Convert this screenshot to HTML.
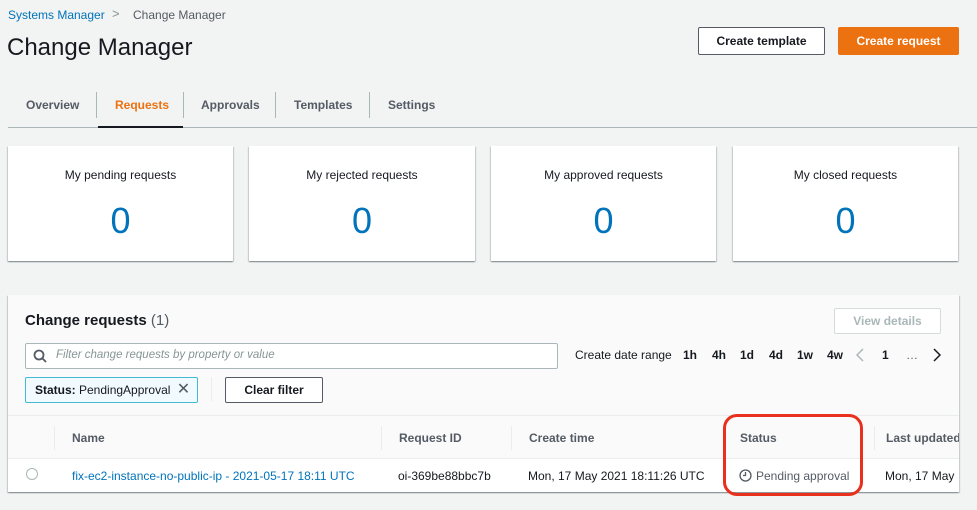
<!DOCTYPE html>
<html><head><style>
body{margin:0;width:977px;height:510px;background:#f2f3f3;font-family:"Liberation Sans",sans-serif;position:relative;overflow:hidden;color:#16191f}
.a{position:absolute;white-space:nowrap}
.card{position:absolute;top:146px;height:115px;background:#fff;box-shadow:0 1px 1px rgba(0,28,36,.3),1px 1px 1px rgba(0,28,36,.15),-1px 1px 1px rgba(0,28,36,.15)}
.card .t{position:absolute;top:22px;width:100%;text-align:center;font-size:12px;color:#16191f}
.card .n{position:absolute;top:54px;width:100%;text-align:center;font-size:36px;color:#0073bb}
.tab{position:absolute;top:98px;font-size:12px;font-weight:bold;color:#545b64}
.sep{position:absolute;top:92px;width:1px;height:26px;background:#aab7b8}
.b{font-weight:bold}
.d{position:absolute;top:53px;font-size:12px;font-weight:bold}
</style></head><body>
<div class="a" style="left:8px;top:8px;font-size:12px;color:#0073bb">Systems Manager</div>
<div class="a" style="left:112px;top:6px;font-size:13px;color:#879596">&gt;</div>
<div class="a" style="left:133px;top:8px;font-size:12px;color:#545b64">Change Manager</div>
<div class="a" style="left:7px;top:34px;font-size:24px;color:#16191f">Change Manager</div>
<div class="a b" style="left:698px;top:27px;width:125px;height:26px;border:1px solid #545b64;background:#fff;border-radius:2px;font-size:12px;text-align:center;line-height:26px;color:#16191f">Create template</div>
<div class="a b" style="left:838px;top:27px;width:121px;height:28px;background:#ec7211;border-radius:2px;font-size:12px;text-align:center;line-height:28px;color:#fff">Create request</div>
<div class="tab" style="left:26px">Overview</div>
<div class="sep" style="left:96px"></div>
<div class="tab" style="left:115px;color:#ec7211">Requests</div>
<div class="sep" style="left:183px"></div>
<div class="tab" style="left:201px">Approvals</div>
<div class="sep" style="left:275px"></div>
<div class="tab" style="left:294px">Templates</div>
<div class="sep" style="left:369px"></div>
<div class="tab" style="left:388px">Settings</div>
<div class="a" style="left:8px;top:127px;width:969px;height:1px;background:#aab7b8"></div>
<div class="a" style="left:98px;top:126px;width:85px;height:2px;background:#16191f"></div>
<div class="card" style="left:8px;width:225px"><div class="t">My pending requests</div><div class="n">0</div></div>
<div class="card" style="left:249px;width:226px"><div class="t">My rejected requests</div><div class="n">0</div></div>
<div class="card" style="left:491px;width:225px"><div class="t">My approved requests</div><div class="n">0</div></div>
<div class="card" style="left:733px;width:225px"><div class="t">My closed requests</div><div class="n">0</div></div>
<div class="a" style="left:8px;top:295px;width:951px;height:197px;background:#fafafa;overflow:hidden;box-shadow:0 1px 1px rgba(0,28,36,.3),1px 1px 1px rgba(0,28,36,.15),-1px 1px 1px rgba(0,28,36,.15)">
 <div class="a b" style="left:17px;top:17px;font-size:15px">Change requests <span style="font-weight:normal;color:#545b64">(1)</span></div>
 <div class="a b" style="left:826px;top:13px;width:105px;height:24px;border:1px solid #d5dbdb;background:#fff;border-radius:2px;font-size:12px;color:#aab7b8;text-align:center;line-height:24px">View details</div>
 <div class="a" style="left:17px;top:48px;width:531px;height:24px;border:1px solid #aab7b8;background:#fff;border-radius:2px">
  <svg class="a" style="left:7px;top:5px" width="14" height="14" viewBox="0 0 14 14"><circle cx="6" cy="6" r="4.5" fill="none" stroke="#545b64" stroke-width="1.8"/><path d="M9.3 9.3L13 13" stroke="#545b64" stroke-width="1.8"/></svg>
  <div class="a" style="left:30px;top:5px;font-size:11.5px;font-style:italic;color:#879596">Filter change requests by property or value</div>
 </div>
 <div class="a" style="left:567px;top:53px;font-size:12px">Create date range</div>
 <div class="d" style="left:675px">1h</div>
 <div class="d" style="left:704px">4h</div>
 <div class="d" style="left:732px">1d</div>
 <div class="d" style="left:761px">4d</div>
 <div class="d" style="left:789px">1w</div>
 <div class="d" style="left:819px">4w</div>
 <svg class="a" style="left:848px;top:53px" width="8" height="14" viewBox="0 0 8 14"><path d="M7 1L1 7l6 6" fill="none" stroke="#aab7b8" stroke-width="1.5"/></svg>
 <div class="d" style="left:874px">1</div>
 <div class="a" style="left:898px;top:53px;font-size:12px;color:#545b64">…</div>
 <svg class="a" style="left:925px;top:53px" width="8" height="14" viewBox="0 0 8 14"><path d="M1 1l6 6-6 6" fill="none" stroke="#16191f" stroke-width="1.5"/></svg>
 <div class="a" style="left:17px;top:82px;width:171px;height:24px;border:1px solid #44b9d6;background:#f1faff;border-radius:2px;font-size:12px;line-height:24px">
  <span style="margin-left:9px" class="b">Status:</span> PendingApproval <span style="font-size:16px;margin-left:3px;color:#545b64">✕</span></div>
 <div class="a" style="left:203px;top:82px;width:1px;height:24px;background:#eaeded"></div>
 <div class="a b" style="left:217px;top:82px;width:96px;height:24px;border:1px solid #545b64;background:#fff;border-radius:2px;font-size:12px;text-align:center;line-height:24px">Clear filter</div>
 <div class="a" style="left:0;top:120px;width:951px;height:1px;background:#eaeded"></div>
 <div class="a" style="left:46px;top:131px;width:1px;height:24px;background:#eaeded"></div>
 <div class="a" style="left:373px;top:131px;width:1px;height:24px;background:#eaeded"></div>
 <div class="a" style="left:503px;top:131px;width:1px;height:24px;background:#eaeded"></div>
 <div class="a" style="left:866px;top:131px;width:1px;height:24px;background:#eaeded"></div>
 <div class="a b" style="left:64px;top:136px;font-size:12px;color:#545b64">Name</div>
 <div class="a b" style="left:391px;top:136px;font-size:12px;color:#545b64">Request ID</div>
 <div class="a b" style="left:521px;top:136px;font-size:12px;color:#545b64">Create time</div>
 <div class="a b" style="left:732px;top:136px;font-size:12px;color:#545b64">Status</div>
 <div class="a b" style="left:878px;top:136px;font-size:12px;color:#545b64">Last updated</div>
 <div class="a" style="left:0;top:163px;width:951px;height:34px;background:#fff;border-top:1px solid #eaeded"></div>
 <div class="a" style="left:18px;top:173px;width:10px;height:10px;border:1px solid #aab7b8;border-radius:50%;background:#fff"></div>
 <div class="a" style="left:64px;top:174px;font-size:12px;color:#0073bb">fix-ec2-instance-no-public-ip - 2021-05-17 18:11 UTC</div>
 <div class="a" style="left:390px;top:174px;font-size:12px">oi-369be88bbc7b</div>
 <div class="a" style="left:520px;top:174px;font-size:12px">Mon, 17 May 2021 18:11:26 UTC</div>
 <svg class="a" style="left:731px;top:174px" width="13" height="13" viewBox="0 0 13 13"><circle cx="6.5" cy="6.5" r="5.5" fill="none" stroke="#545b64" stroke-width="1.3"/><path d="M6.5 3v3.5H4" fill="none" stroke="#545b64" stroke-width="1.3"/></svg>
 <div class="a" style="left:748px;top:174px;font-size:12px;color:#545b64">Pending approval</div>
 <div class="a" style="left:877px;top:174px;font-size:12px">Mon, 17 May</div>
</div>
<div class="a" style="left:723px;top:414px;width:134px;height:76px;border:3px solid #e8301c;border-radius:14px"></div>
</body></html>
